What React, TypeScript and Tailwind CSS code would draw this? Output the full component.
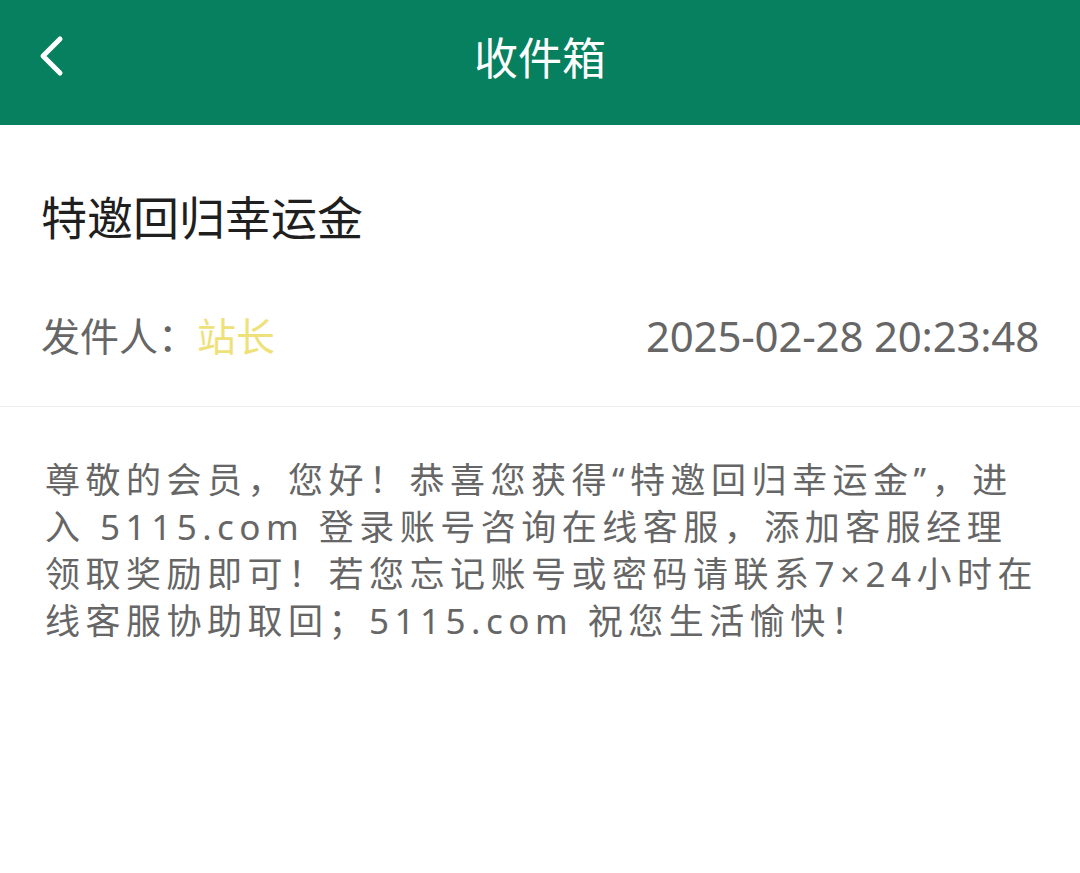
import React from 'react';

const lines = [
  '尊敬的会员，您好！恭喜您获得“特邀回归幸运金”，进',
  '入 5115.com 登录账号咨询在线客服，添加客服经理',
  '领取奖励即可！若您忘记账号或密码请联系7×24小时在',
  '线客服协助取回；5115.com 祝您生活愉快！',
];

const App: React.FC = () => {
  return (
    <div className="w-[1080px] min-h-[873px] bg-white font-['Noto_Sans','Noto_Sans_CJK_SC',sans-serif]">
      {/* Header */}
      <div className="h-[125px] bg-[#07805f] flex items-center justify-center relative">
        <button className="absolute left-[34px] top-[34px] w-[34px] h-[44px] flex items-center justify-center">
          <svg width="30" height="42" viewBox="0 0 30 42" fill="none">
            <path d="M24 4 L7 21 L24 38" stroke="white" strokeWidth="5" strokeLinecap="round" strokeLinejoin="round" />
          </svg>
        </button>
        <h1 className="text-[44px] leading-none text-white -mt-[10px]">收件箱</h1>
      </div>

      {/* Mail head */}
      <div className="px-[41px] border-b border-[#eeeeee]">
        <div className="pt-[58px] text-[46px] leading-[68px] text-[#1f1f1f]">特邀回归幸运金</div>
        <div className="mt-[56px] pb-[42px] flex items-center justify-between leading-[57px]">
          <div className="text-[39px] text-[#666666]">
            发件人：<span className="text-[#efe17a]">站长</span>
          </div>
          <div className="text-[42px] tracking-[-0.2px] text-[#666666]">2025-02-28 20:23:48</div>
        </div>
      </div>

      {/* Body */}
      <div className="pl-[45px] pt-[49px] text-[35px] leading-[47px] tracking-[5.5px] text-[#666666]">
        {lines.map((l, i) => (
          <div key={i} className="whitespace-nowrap">{l}</div>
        ))}
      </div>
    </div>
  );
};

export default App;
